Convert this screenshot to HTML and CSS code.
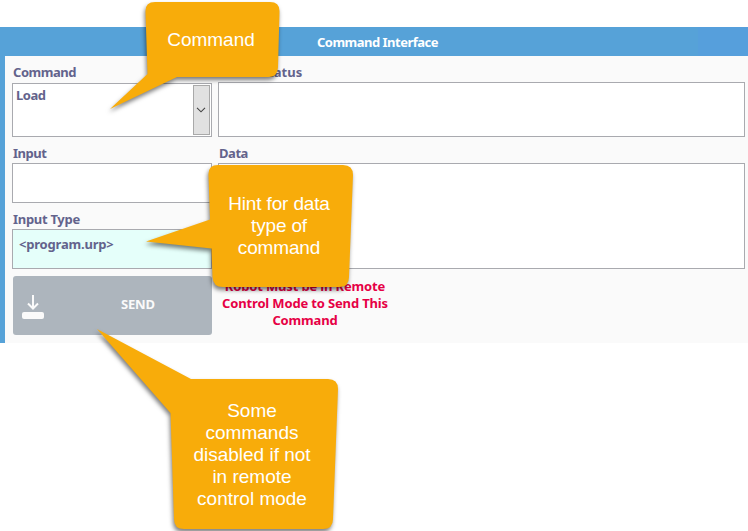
FILE: index.html
```html
<!DOCTYPE html>
<html lang="en">
<head>
<meta charset="utf-8">
<title>Command Interface</title>
<link rel="stylesheet" href="styles.css">
</head>
<body>
<main class="panel">
  <header class="panel-header">Command Interface</header>
  <div class="panel-body">
    <section class="column controls">
      <label class="label label-top">Command</label>
      <div class="field select">
        <span class="value">Load</span>
        <span class="arrow"><svg width="10" height="6" viewBox="0 0 10 6"><path d="M1 .8 5 4.8 9 .8" fill="none" stroke="#444" stroke-width="1.1"/></svg></span>
      </div>
      <label class="label label-input">Input</label>
      <div class="field input"></div>
      <label class="label label-type">Input Type</label>
      <div class="field hint"><span class="hint-text">&lt;program.urp&gt;</span></div>
      <button class="send" disabled>
        <svg class="send-icon" width="24" height="26" viewBox="0 0 24 26"><path d="M12 1v13M7 9.500l5 5 5-5" fill="none" stroke="#fafafa" stroke-width="2"/><rect x="1" y="18" width="22" height="7" rx="2" fill="#fafafa"/></svg>
        <span>SEND</span>
      </button>
    </section>
    <section class="column output">
      <label class="label label-status">Robot Status</label>
      <div class="field status"></div>
      <label class="label label-input">Data</label>
      <div class="field data"></div>
      <p class="warning">Robot Must be in Remote<br>Control Mode to Send This<br>Command</p>
    </section>
  </div>
</main>
<svg class="callouts" width="748" height="531" viewBox="0 0 748 531">
  <path d="M155 2H270Q280 2 279.500 12L278 67Q278 77 268 77H177L110 109 147.500 74 145.500 12Q145 2 155 2Z"/>
  <path d="M218 165H343Q353 165 353 175L349 277Q349 287 339 287H223Q213 287 212.500 277L211.500 248.500 146 241.500 210 219.500 208.500 175Q208 165 218 165Z"/>
  <path d="M191 379H328Q338 379 338 389L333 519Q333 529 323 529H184Q174 529 174 519L170.500 413 97 329Z"/>
</svg>
<div class="note note-command">Command</div>
<div class="note note-hint">Hint for data<br>type of<br>command</div>
<div class="note note-send">Some<br>commands<br>disabled if not<br>in remote<br>control mode</div>
</body>
</html>
```
FILE: styles.css
```css
* { box-sizing: border-box; }
body {
  margin: 0;
  width: 748px;
  height: 531px;
  overflow: hidden;
  position: relative;
  background: #fff;
  color: #63638c;
  font: 700 13px/18px "Noto Sans", "Open Sans", sans-serif;
  letter-spacing: -.45px;
}
.panel { margin-top: 27px; height: 316px; border-left: 5px solid #56a2d8; background: #fafafa; }
.panel-header {
  height: 29px;
  margin-left: -5px;
  padding: 0 0 0 7px;
  background: linear-gradient(90deg, #56a2d8 698px, #569fdc 698px);
  color: #fff;
  line-height: 31px;
  letter-spacing: -.5px;
  text-align: center;
}
.panel-body { display: flex; gap: 6px; padding: 7px 3px 0 7px; }
.column { display: flex; flex-direction: column; }
.controls { width: 200px; }
.output { flex: 1; }
.label { height: 20px; padding-left: 1px; line-height: 20px; }
.label-top { line-height: 18px; }
.label-status { height: 19px; line-height: 18px; letter-spacing: 0; }
.label-input { margin-top: 6px; }
.label-type { margin-top: 6px; letter-spacing: -.3px; }
.field { border: 1px solid #a9aaaf; background: #fff; }
.select { display: flex; justify-content: space-between; height: 54px; padding: 1px; }
.value { padding: 1px 0 0 2px; }
.arrow { display: flex; align-items: center; justify-content: center; width: 17px; padding-right: 2px; border: 1px solid #a9a9a9; background: #e1e1e1; }
.input { height: 40px; }
.hint { height: 40px; padding: 5px 6px; background: #e5fffa; letter-spacing: -.2px; }
.status { height: 55px; }
.data { height: 106px; }
.send {
  display: flex;
  align-items: center;
  height: 59px;
  margin: 7px 0 0 1px;
  padding: 0 0 0 8px;
  border: 0;
  border-radius: 3px;
  background: #adb5bd;
  color: #fafafa;
  font: inherit;
  letter-spacing: -.2px;
}
.send-icon { margin: 2px 0 0; }
.send span { margin: -3px 0 0 76px; }
.warning { width: 172px; margin: 9px 0 0 1px; color: #e60045; line-height: 17px; letter-spacing: -.15px; text-align: center; white-space: nowrap; }
.callouts { position: absolute; inset: 0; fill: #f8ac0a; filter: drop-shadow(-1px 3px 2px rgba(0, 0, 0, .5)); }
.note { position: absolute; color: #fff; font: 400 19px/22px "Liberation Sans", Arial, sans-serif; letter-spacing: 0; text-align: center; white-space: nowrap; }
.note-command { left: 146px; top: 29px; width: 130px; }
.note-hint { left: 209px; top: 193px; width: 140px; letter-spacing: -.15px; }
.note-send { left: 172px; top: 400px; width: 160px; }
```
